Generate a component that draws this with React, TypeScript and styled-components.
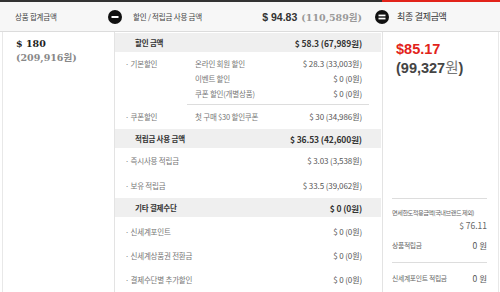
import styled, { createGlobalStyle } from "styled-components";

const GlobalStyle = createGlobalStyle`
  body {
    margin: 0;
    background: #fff;
    font-family: "Noto Sans CJK KR", "Noto Sans", sans-serif;
    color: #555;
  }
`;

const Page = styled.div`
  width: 500px;
  height: 292px;
  overflow: hidden;
`;

const Header = styled.div`
  display: grid;
  grid-template-columns: 115px 267px 118px;
  height: 32px;
`;

const HeadCell = styled.div<{ $accent?: boolean }>`
  position: relative;
  display: flex;
  align-items: center;
  box-sizing: border-box;
  border-top: 2px solid ${(p) => (p.$accent ? "#e2231a" : "#333")};
  border-bottom: 1px solid #dcdcdc;
  background: #f7f7f7;
  padding-left: 15px;
  padding-right: 20px;
  font-size: 7.5px;
  letter-spacing: -0.2px;
  color: #444;
`;

const HeadTitle = styled.span`
  flex: 1;
`;

const BigTitle = styled.span`
  font-size: 9px;
  letter-spacing: -0.3px;
  color: #333;
`;

const Sign = styled.svg`
  position: absolute;
  left: -7px;
  top: 8px;
  width: 14px;
  height: 14px;
`;

const HeadAmount = styled.span`
  font-family: "Liberation Sans", Arial, sans-serif;
  font-weight: bold;
  font-size: 10.5px;
  color: #333;
  letter-spacing: 0;
`;

const HeadWon = styled.span`
  font-family: "DejaVu Serif", "Noto Sans CJK KR", serif;
  font-weight: bold;
  font-size: 9.5px;
  color: #999;
  margin-left: 4px;
  letter-spacing: 0;
`;

const Body = styled.div`
  display: grid;
  grid-template-columns: 115px 267px 118px;
  height: 260px;
`;

const LeftCol = styled.div`
  margin-left: 2px;
  border-left: 1px solid #e8e8e8;
  border-right: 1px solid #e3e3e3;
  padding: 5px 0 0 13px;
  font-family: "DejaVu Serif", "Noto Sans CJK KR", serif;
  font-weight: bold;
  font-size: 9.5px;
  line-height: 14px;
  color: #222;
`;

const Gray = styled.div`
  color: #888;
`;

const MidCol = styled.div`
  padding-right: 1px;
`;

const SectionHead = styled.div<{ $first?: boolean }>`
  display: flex;
  justify-content: space-between;
  align-items: center;
  height: 19px;
  margin-top: ${(p) => (p.$first ? "1px" : "0")};
  padding: 0 19px 0 20px;
  background: #efefef;
  font-size: 7.5px;
  font-weight: bold;
  color: #333;
  letter-spacing: -0.2px;
`;

const HeadValue = styled.span`
  font-size: 8.5px;
  letter-spacing: -0.1px;
`;

const Block = styled.div<{ $pad: string }>`
  padding: ${(p) => p.$pad};
`;

const Row = styled.div<{ $h: number }>`
  display: grid;
  grid-template-columns: 70px 1fr auto;
  align-items: center;
  height: ${(p) => p.$h}px;
  padding: 0 19px 0 10px;
  font-size: 7.5px;
  letter-spacing: -0.2px;
  color: #777;
`;

const Value = styled.span`
  font-size: 8px;
  color: #555;
  letter-spacing: -0.1px;
`;

const Divider = styled.div<{ $m: string }>`
  height: 1px;
  background: #ddd;
  margin: ${(p) => p.$m};
`;

const RightCol = styled.div`
  border-left: 1px solid #e3e3e3;
  border-right: 1px solid #e8e8e8;
  margin-right: 1px;
  padding-top: 8px;
`;

const Final = styled.div`
  padding-left: 13px;
  font-family: "Liberation Sans", Arial, sans-serif;
  font-weight: bold;
  font-size: 14.5px;
  line-height: 18px;
  color: #e2231a;
`;

const FinalWon = styled.div`
  padding-left: 13px;
  font-family: "Liberation Sans", "Noto Sans CJK KR", sans-serif;
  font-weight: bold;
  font-size: 14.5px;
  line-height: 18px;
  color: #444;

  span {
    font-family: "Noto Sans CJK KR", sans-serif;
    font-weight: normal;
    color: #777;
  }
`;

const Extra = styled.div`
  margin-top: 121px;
  padding: 0 11px 0 9px;
`;

const Note = styled.div`
  margin-top: 8px;
  font-size: 6.2px;
  letter-spacing: -0.5px;
  line-height: 12px;
  color: #666;
`;

const NoteValue = styled.div`
  text-align: right;
  font-size: 8.5px;
  line-height: 12px;
  color: #666;
`;

const SideRow = styled.div<{ $mt: number }>`
  display: flex;
  justify-content: space-between;
  align-items: center;
  height: 14px;
  margin-top: ${(p) => p.$mt}px;
  font-size: 6.8px;
  letter-spacing: -0.3px;
  color: #666;

  b {
    font-weight: normal;
    font-size: 8.5px;
    letter-spacing: 0;
    color: #555;
  }
`;

const discounts = [
  { tag: "· 기본할인", name: "온라인 회원 할인", value: "$ 28.3 (33,003원)" },
  { tag: "", name: "이벤트 할인", value: "$ 0 (0원)" },
  { tag: "", name: "쿠폰 할인(개별상품)", value: "$ 0 (0원)" },
];

const points = [
  { tag: "· 즉시사용 적립금", value: "$ 3.03 (3,538원)" },
  { tag: "· 보유 적립금", value: "$ 33.5 (39,062원)" },
];

const others = [
  { tag: "· 신세계포인트", value: "$ 0 (0원)" },
  { tag: "· 신세계상품권 전환금", value: "$ 0 (0원)" },
  { tag: "· 결제수단별 추가할인", value: "$ 0 (0원)" },
];

function MinusIcon() {
  return (
    <Sign viewBox="0 0 14 14">
      <circle cx="7" cy="7" r="7" fill="#111" />
      <rect x="3.5" y="6" width="7" height="2" fill="#fff" />
    </Sign>
  );
}

function EqualIcon() {
  return (
    <Sign viewBox="0 0 14 14">
      <circle cx="7" cy="7" r="7" fill="#111" />
      <rect x="3.5" y="4.6" width="7" height="1.7" fill="#fff" />
      <rect x="3.5" y="7.7" width="7" height="1.7" fill="#fff" />
    </Sign>
  );
}

export default function App() {
  return (
    <Page>
      <GlobalStyle />
      <Header>
        <HeadCell>
          <HeadTitle>상품 합계금액</HeadTitle>
        </HeadCell>
        <HeadCell>
          <MinusIcon />
          <HeadTitle style={{ paddingLeft: 3 }}>할인 / 적립금 사용 금액</HeadTitle>
          <HeadAmount>$ 94.83</HeadAmount>
          <HeadWon>(110,589원)</HeadWon>
        </HeadCell>
        <HeadCell $accent>
          <EqualIcon />
          <BigTitle>최종 결제금액</BigTitle>
        </HeadCell>
      </Header>

      <Body>
        <LeftCol>
          <div>$ 180</div>
          <Gray>(209,916원)</Gray>
        </LeftCol>

        <MidCol>
          <SectionHead $first>
            <span>할인 금액</span>
            <HeadValue>$ 58.3 (67,989원)</HeadValue>
          </SectionHead>
          <Block $pad="4px 0 5px">
            {discounts.map((d) => (
              <Row $h={15} key={d.name}>
                <span>{d.tag}</span>
                <span>{d.name}</span>
                <Value>{d.value}</Value>
              </Row>
            ))}
            <Divider $m="3px 12px 4px 72px" />
            <Row $h={15}>
              <span>· 쿠폰할인</span>
              <span>첫 구매 $30 할인쿠폰</span>
              <Value>$ 30 (34,986원)</Value>
            </Row>
          </Block>

          <SectionHead>
            <span>적립금 사용 금액</span>
            <HeadValue>$ 36.53 (42,600원)</HeadValue>
          </SectionHead>
          <Block $pad="0">
            {points.map((p) => (
              <Row $h={25} key={p.tag}>
                <span style={{ gridColumn: "1 / 3" }}>{p.tag}</span>
                <Value>{p.value}</Value>
              </Row>
            ))}
          </Block>

          <SectionHead>
            <span>기타 결제수단</span>
            <HeadValue>$ 0 (0원)</HeadValue>
          </SectionHead>
          <Block $pad="2px 0 0">
            {others.map((o) => (
              <Row $h={24} key={o.tag}>
                <span style={{ gridColumn: "1 / 3" }}>{o.tag}</span>
                <Value>{o.value}</Value>
              </Row>
            ))}
          </Block>
        </MidCol>

        <RightCol>
          <Final>$85.17</Final>
          <FinalWon>
            (99,327<span>원</span>)
          </FinalWon>
          <Extra>
            <Divider $m="0" />
            <Note>면세한도적용금액(국내브랜드 제외)</Note>
            <NoteValue>$ 76.11</NoteValue>
            <SideRow $mt={7}>
              <span>상품적립금</span>
              <b>0 원</b>
            </SideRow>
            <Divider $m="10px 0 0" />
            <SideRow $mt={8}>
              <span>신세계포인트 적립금</span>
              <b>0 원</b>
            </SideRow>
          </Extra>
        </RightCol>
      </Body>
    </Page>
  );
}
